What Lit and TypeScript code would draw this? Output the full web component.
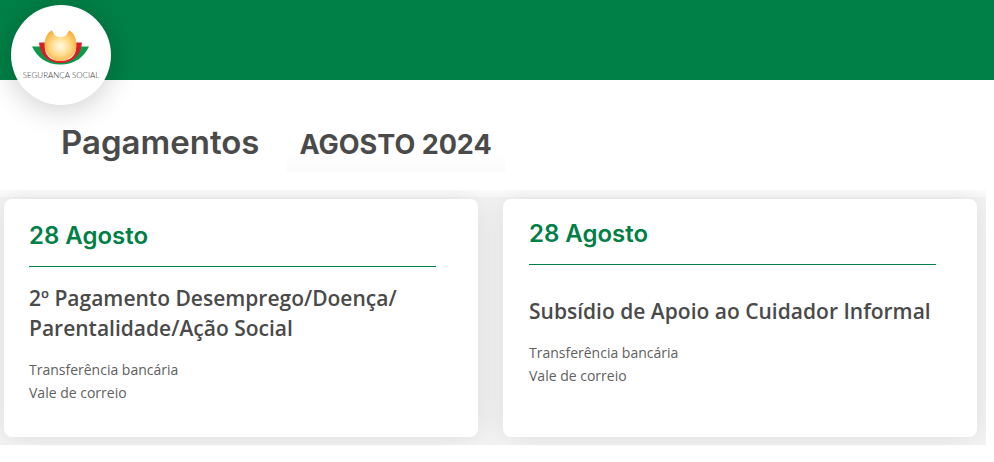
import { LitElement, html, css } from "lit";
import { customElement, property } from "lit/decorators.js";

interface Payment {
  date: string;
  title: string;
  methods: string[];
}

const payments: Payment[] = [
  {
    date: "28 Agosto",
    title: "2º Pagamento Desemprego/\u200bDoença/\u200bParentalidade/\u200bAção Social",
    methods: ["Transferência bancária", "Vale de correio"],
  },
  {
    date: "28 Agosto",
    title: "Subsídio de Apoio ao Cuidador Informal",
    methods: ["Transferência bancária", "Vale de correio"],
  },
];

@customElement("brand-logo")
export class BrandLogo extends LitElement {
  static styles = css`
    :host {
      display: block;
    }
    .disc {
      display: flex;
      flex-direction: column;
      align-items: center;
      box-sizing: border-box;
      width: 100px;
      height: 100px;
      padding-top: 24px;
      border-radius: 50%;
      background: #fff;
      box-shadow: 0 4px 30px rgba(0, 0, 0, 0.2);
      text-decoration: none;
    }
    .mark {
      display: block;
      width: 60px;
      height: 38px;
    }
    .name {
      margin-top: 2px;
      font: 300 8px/12px Lato, sans-serif;
      color: #333;
      white-space: nowrap;
    }
  `;

  render() {
    return html`
      <a class="disc" href="#">
        <svg class="mark" viewBox="0 0 60 38" aria-hidden="true">
          <defs>
            <radialGradient id="sun" cx="0.5" cy="0.52" r="0.58">
              <stop offset="0" stop-color="#fffbe8" />
              <stop offset="0.5" stop-color="#ffdc8c" />
              <stop offset="1" stop-color="#f7ab32" />
            </radialGradient>
          </defs>
          <path d="M1 17.500H10C12 27 19 33 29.500 33S47 27 49 17.500H58C53 28 44 35.500 29.500 35.500S6 28 1 17.500Z" fill="#0a9a49" />
          <path d="M8 13.500H14V20C15 28 21 32 29.500 32S44 28 45 20V13.500H51C50 26 42 34 29.500 34S9 26 8 13.500Z" fill="#d9202a" />
          <path d="M20.500 1.500C23 2.500 22 8 29.500 8S36 2.500 38.500 1.500C42.500 4 45.500 9 45.500 16A16 16 0 0 1 13.500 16C13.500 9 16.500 4 20.500 1.500Z" fill="url(#sun)" />
        </svg>
        <span class="name">SEGURANÇA SOCIAL</span>
      </a>
    `;
  }
}

@customElement("payment-card")
export class PaymentCard extends LitElement {
  @property({ attribute: false }) payment!: Payment;

  static styles = css`
    :host {
      display: block;
      box-sizing: border-box;
      min-width: 0;
      min-height: 238px;
      padding: 22px 42px 32px 25px;
      border-radius: 8px;
      background: #fff;
      box-shadow: 0 0 30px rgba(0, 0, 0, 0.1);
    }
    :host([single]) {
      padding: 20px 41px 32px 26px;
    }
    .date {
      margin: 0;
      padding-bottom: 15px;
      border-bottom: 1px solid #007f46;
      font: 600 24px/30px Inter, sans-serif;
      color: #007f46;
    }
    .title {
      margin: 16px 0 15px;
      font: 600 21px/30px "Open Sans", sans-serif;
      color: #4a4a4a;
    }
    :host([single]) .title {
      margin-top: 31px;
    }
    .methods {
      margin: 0;
      padding: 0;
      list-style: none;
      font: 400 14px/23px "Open Sans", sans-serif;
      color: #606060;
    }
  `;

  render() {
    const { date, title, methods } = this.payment;
    return html`
      <h2 class="date">${date}</h2>
      <h3 class="title">${title}</h3>
      <ul class="methods">
        ${methods.map((m) => html`<li>${m}</li>`)}
      </ul>
    `;
  }
}

@customElement("app-root")
export class AppRoot extends LitElement {
  static styles = css`
    :host {
      display: block;
      background: #fff;
    }
    .bar {
      display: flex;
      box-sizing: border-box;
      height: 80px;
      padding: 5px 11px 0;
      background: #007f46;
    }
    .heading {
      display: flex;
      align-items: flex-end;
      gap: 27px;
      padding: 40px 61px 18px;
    }
    .page-title {
      margin: 0;
      padding-bottom: 8px;
      font: 600 33px/44px Inter, sans-serif;
      color: #4a4a4a;
    }
    .month {
      margin: 0;
      padding: 0 13px 7px;
      background: linear-gradient(#fff 60%, #fafafa);
      font: 700 27px/40px Inter, sans-serif;
      color: #4a4a4a;
    }
    .cards {
      display: grid;
      grid-template-columns: repeat(2, minmax(0, 1fr));
      gap: 25px;
      margin-right: 8px;
      padding: 9px 9px 8px 4px;
      overflow: hidden;
      background: linear-gradient(#fdfdfd, #f9f9f9 7px, #f4f4f4 7px);
    }
  `;

  render() {
    return html`
      <header class="bar"><brand-logo></brand-logo></header>
      <main>
        <div class="heading">
          <h1 class="page-title">Pagamentos</h1>
          <p class="month">AGOSTO 2024</p>
        </div>
        <section class="cards">
          ${payments.map(
            (p, i) => html`<payment-card .payment=${p} ?single=${i === 1}></payment-card>`
          )}
        </section>
      </main>
    `;
  }
}
